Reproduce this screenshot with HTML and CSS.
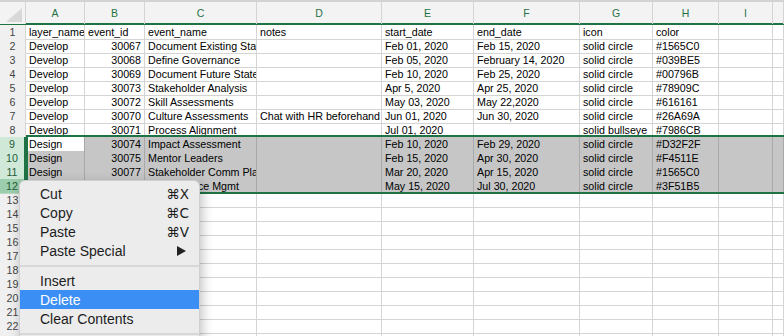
FILE: index.html
```html
<!DOCTYPE html>
<html lang="en">
<head>
    <meta charset="UTF-8">
    <meta name="viewport" content="width=device-width, initial-scale=1.0">
    <title>events.xlsx</title>
    <link rel="stylesheet" href="styles.css">
</head>
<body>
    <div class="sheet">
        <!-- En-tetes de colonnes -->
        <div class="row head">
            <div class="corner"><span class="tri"></span></div>
            <div class="col">A</div>
            <div class="col">B</div>
            <div class="col">C</div>
            <div class="col">D</div>
            <div class="col">E</div>
            <div class="col">F</div>
            <div class="col">G</div>
            <div class="col">H</div>
            <div class="col">I</div>
            <div class="col"></div>
        </div>

        <div class="row"><div class="rh">1</div><div class="c">layer_name</div><div class="c">event_id</div><div class="c">event_name</div><div class="c">notes</div><div class="c">start_date</div><div class="c">end_date</div><div class="c">icon</div><div class="c">color</div><div class="c"></div><div class="c"></div></div>
        <div class="row"><div class="rh">2</div><div class="c">Develop</div><div class="c n">30067</div><div class="c">Document Existing State</div><div class="c"></div><div class="c">Feb 01, 2020</div><div class="c">Feb 15, 2020</div><div class="c">solid circle</div><div class="c">#1565C0</div><div class="c"></div><div class="c"></div></div>
        <div class="row"><div class="rh">3</div><div class="c">Develop</div><div class="c n">30068</div><div class="c">Define Governance</div><div class="c"></div><div class="c">Feb 05, 2020</div><div class="c">February 14, 2020</div><div class="c">solid circle</div><div class="c">#039BE5</div><div class="c"></div><div class="c"></div></div>
        <div class="row"><div class="rh">4</div><div class="c">Develop</div><div class="c n">30069</div><div class="c">Document Future State</div><div class="c"></div><div class="c">Feb 10, 2020</div><div class="c">Feb 25, 2020</div><div class="c">solid circle</div><div class="c">#00796B</div><div class="c"></div><div class="c"></div></div>
        <div class="row"><div class="rh">5</div><div class="c">Develop</div><div class="c n">30073</div><div class="c">Stakeholder Analysis</div><div class="c"></div><div class="c">Apr 5, 2020</div><div class="c">Apr 25, 2020</div><div class="c">solid circle</div><div class="c">#78909C</div><div class="c"></div><div class="c"></div></div>
        <div class="row"><div class="rh">6</div><div class="c">Develop</div><div class="c n">30072</div><div class="c">Skill Assessments</div><div class="c"></div><div class="c">May 03, 2020</div><div class="c">May 22,2020</div><div class="c">solid circle</div><div class="c">#616161</div><div class="c"></div><div class="c"></div></div>
        <div class="row"><div class="rh">7</div><div class="c">Develop</div><div class="c n">30070</div><div class="c">Culture Assessments</div><div class="c">Chat with HR beforehand</div><div class="c">Jun 01, 2020</div><div class="c">Jun 30, 2020</div><div class="c">solid circle</div><div class="c">#26A69A</div><div class="c"></div><div class="c"></div></div>
        <div class="row"><div class="rh">8</div><div class="c">Develop</div><div class="c n">30071</div><div class="c">Process Alignment</div><div class="c"></div><div class="c">Jul 01, 2020</div><div class="c"></div><div class="c">solid bullseye</div><div class="c">#7986CB</div><div class="c"></div><div class="c"></div></div>

        <!-- Lignes selectionnees -->
        <div class="selection">
            <div class="row picked"><div class="rh">9</div><div class="c active">Design</div><div class="c n">30074</div><div class="c">Impact Assessment</div><div class="c"></div><div class="c">Feb 10, 2020</div><div class="c">Feb 29, 2020</div><div class="c">solid circle</div><div class="c">#D32F2F</div><div class="c"></div><div class="c"></div></div>
            <div class="row picked"><div class="rh">10</div><div class="c">Design</div><div class="c n">30075</div><div class="c">Mentor Leaders</div><div class="c"></div><div class="c">Feb 15, 2020</div><div class="c">Apr 30, 2020</div><div class="c">solid circle</div><div class="c">#F4511E</div><div class="c"></div><div class="c"></div></div>
            <div class="row picked"><div class="rh">11</div><div class="c">Design</div><div class="c n">30077</div><div class="c">Stakeholder Comm Plan</div><div class="c"></div><div class="c">Mar 20, 2020</div><div class="c">Apr 15, 2020</div><div class="c">solid circle</div><div class="c">#1565C0</div><div class="c"></div><div class="c"></div></div>
            <div class="row picked hover"><div class="rh">12</div><div class="c">Design</div><div class="c n">30078</div><div class="c">Performance Mgmt</div><div class="c"></div><div class="c">May 15, 2020</div><div class="c">Jul 30, 2020</div><div class="c">solid circle</div><div class="c">#3F51B5</div><div class="c"></div><div class="c"></div></div>
            <div class="frame"></div>
        </div>

        <div id="empty-rows"></div>
    </div>

    <!-- Menu contextuel -->
    <div class="menu">
        <div class="item"><span>Cut</span><span class="key">&#8984;X</span></div>
        <div class="item"><span>Copy</span><span class="key">&#8984;C</span></div>
        <div class="item"><span>Paste</span><span class="key">&#8984;V</span></div>
        <div class="item"><span>Paste Special</span>
            <svg class="arrow" width="9" height="10" viewBox="0 0 9 10"><polygon points="0,0 9,5 0,10" fill="#222"/></svg>
        </div>
        <div class="sep"></div>
        <div class="item"><span>Insert</span></div>
        <div class="item on"><span>Delete</span></div>
        <div class="item"><span>Clear Contents</span></div>
        <div class="sep"></div>
    </div>

    <script>
        // Lignes vides 13 a 23
        const emptyRows = document.getElementById('empty-rows');
        for (let i = 13; i <= 23; i++) {
            const row = document.createElement('div');
            row.classList.add('row');
            row.innerHTML = `<div class="rh">${i}</div>` + '<div class="c"></div>'.repeat(10);
            emptyRows.appendChild(row);
        }
    </script>
</body>
</html>
```

FILE: styles.css
```css
* {
    margin: 0;
    padding: 0;
    box-sizing: border-box;
}

body {
    font-family: "Liberation Sans", Arial, sans-serif;
    background: #fff;
    color: #000;
    width: 784px;
    height: 336px;
    overflow: hidden;
    position: relative;
}

.sheet {
    display: flex;
    flex-direction: column;
    border-top: 2px solid #d2d2d2;
}

.row {
    display: grid;
    grid-template-columns: 26px 59px 60px 112px 125px 92px 106px 73px 66px 54px 1fr;
    height: 14px;
}

/* En-tetes */
.row.head {
    height: 23px;
    background: #f3f3f3;
    border-bottom: 2px solid #1f7244;
}

.corner {
    position: relative;
    border-right: 1px solid #d4d4d4;
    background: #f3f3f3;
}

.tri {
    position: absolute;
    right: 3px;
    bottom: 2px;
    width: 0;
    height: 0;
    border-left: 16px solid transparent;
    border-bottom: 14px solid #d8d8d8;
}

.col {
    border-right: 1px solid #d4d4d4;
    color: #1f7244;
    font-size: 10.5px;
    text-align: center;
    line-height: 22px;
}

.rh {
    background: #f0f0f0;
    border-right: 1px solid #d4d4d4;
    border-bottom: 1px solid #d4d4d4;
    color: #444;
    font-size: 10.7px;
    text-align: center;
    line-height: 14px;
}

.c {
    border-right: 1px solid #d4d4d4;
    border-bottom: 1px solid #d4d4d4;
    font-size: 10.7px;
    line-height: 14px;
    padding: 0 3px;
    white-space: nowrap;
    overflow: hidden;
}

.c.n {
    text-align: right;
}

/* Selection */
.selection {
    position: relative;
}

.picked .c {
    background: #c6c6c6;
    border-color: #a9a9a9;
}

.picked .c.active {
    background: #fff;
}

.picked .rh {
    background: #d0e8d8;
    border-right: 2px solid #1f7244;
    border-bottom-color: #b6d8c1;
    color: #245c38;
}

.picked.hover .rh {
    background: #9ccdac;
}

.frame {
    position: absolute;
    left: 26px;
    right: -2px;
    top: -2px;
    bottom: -1px;
    border: 2px solid #1f7244;
    pointer-events: none;
}

/* Menu contextuel */
.menu {
    position: absolute;
    left: 19px;
    top: 180px;
    width: 181px;
    height: 170px;
    background: #ececec;
    border: 1px solid #d0d0d0;
    border-radius: 6px;
    padding-top: 3px;
    box-shadow: 2px 4px 12px rgba(0, 0, 0, 0.25);
    font-size: 14px;
    color: #1c1c1c;
}

.item {
    display: flex;
    justify-content: space-between;
    align-items: center;
    height: 19px;
    padding: 0 10px 0 20px;
}

.item.on {
    background: #3b8ff4;
    color: #fff;
}

.key {
    font-family: "DejaVu Sans", "Liberation Sans", sans-serif;
    font-size: 13.5px;
}

.arrow {
    margin-right: 3px;
}

.sep {
    height: 11px;
    display: flex;
    align-items: center;
}

.sep::after {
    content: "";
    display: block;
    width: 100%;
    height: 2px;
    background: #d8d8d8;
}
```
